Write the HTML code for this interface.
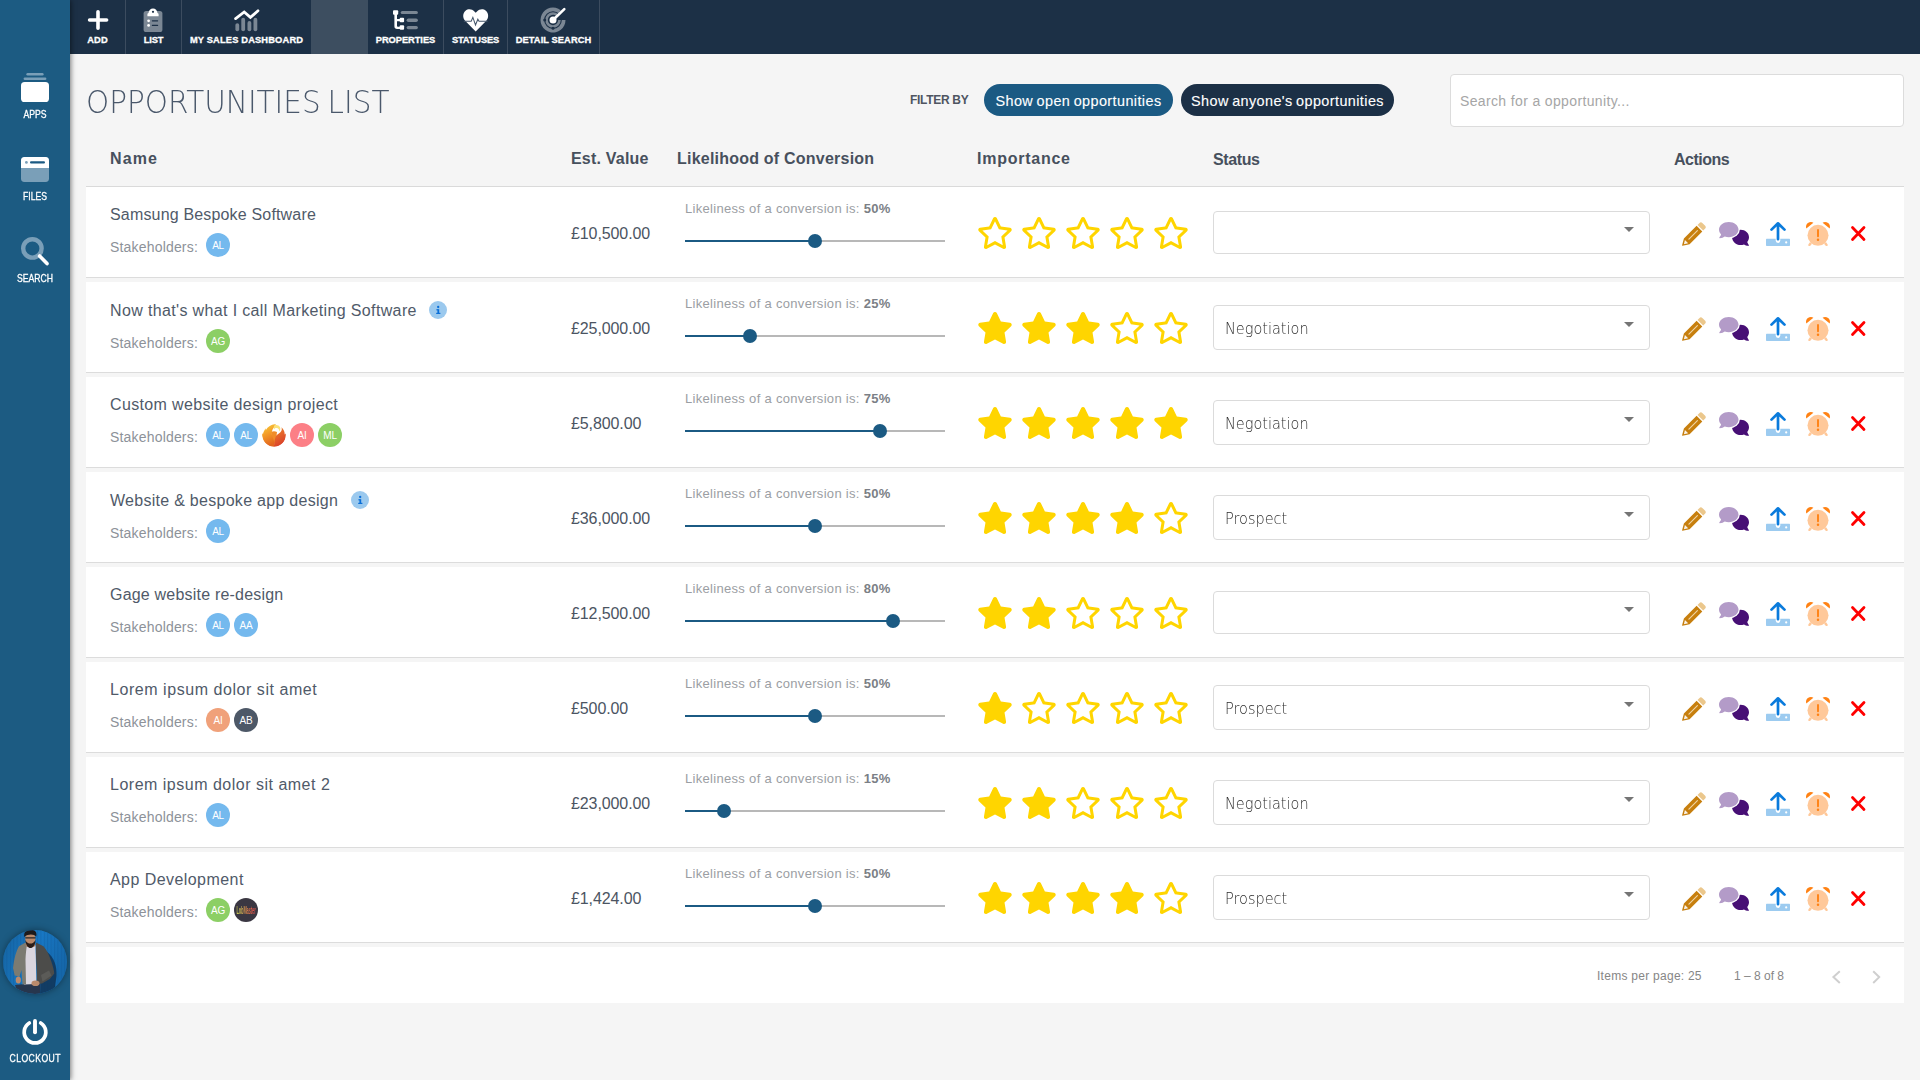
<!DOCTYPE html>
<html lang="en">
<head>
<meta charset="utf-8">
<title>Opportunities List</title>
<style>
*{box-sizing:border-box;margin:0;padding:0}
html,body{width:1920px;height:1080px;overflow:hidden}
body{background:#f5f5f5;font-family:"Liberation Sans",sans-serif;color:#4b5462;position:relative}
.abs,.topbar,.side,.list,.row,.row>div,.hd>*,.pager,.pager>*,.tb>*,.si>*{position:absolute}
svg{display:block}
svg.defs{position:absolute;width:0;height:0;overflow:hidden}

/* ---------- top bar ---------- */
.topbar{left:70px;top:0;width:1850px;height:54px;background:#1c3046}
.tb{position:absolute;top:0;height:54px;border-right:1px solid #3c4c5f}
.tb.on{background:#3d4e60;border-right:0}
.tb .lb{left:0;right:0;top:34px;height:12px;line-height:12px;text-align:center;font-weight:700;font-size:9.3px;letter-spacing:.16px;-webkit-text-stroke:.3px #fff;color:#fff;white-space:nowrap}
.tb svg{top:8px;left:50%;overflow:visible}

/* ---------- sidebar ---------- */
.side{left:0;top:0;width:70px;height:1080px;background:#1c5b82;box-shadow:1px 0 5px rgba(0,0,0,.5)}
.si{position:absolute;left:0;width:70px;height:60px}
.si .lb{left:0;right:0;text-align:center;font-size:10.3px;line-height:12px;color:#fff;white-space:nowrap;letter-spacing:0;-webkit-text-stroke:.28px #fff;transform:scaleX(.84)}
.si svg{overflow:visible}
.me{position:absolute;left:3px;top:930px;width:64px;height:64px;border-radius:50%;overflow:hidden;box-shadow:0 0 7px rgba(0,0,0,.4)}

/* ---------- heading / filters ---------- */
.hd{position:absolute;left:0;top:0;width:1920px;height:187px}
h1{left:85.6px;top:80px;transform:scaleX(.921);word-spacing:-2.6px;font:200 32px/44px "DejaVu Sans Light","DejaVu Sans","Liberation Sans",sans-serif;color:#4a586b;white-space:nowrap;transform-origin:0 50%}
.fby{left:910px;top:92px;font-weight:700;font-size:12px;line-height:16px;color:#4f5561;white-space:nowrap;letter-spacing:-.3px}
.pill{top:84px;height:32px;border-radius:16px;color:#fff;font-size:14.4px;line-height:32px;padding-top:1px;text-align:center;white-space:nowrap;letter-spacing:.42px;word-spacing:-1px;-webkit-text-stroke:.12px #fff}
.p1{left:984px;width:189px;background:#1b5a83}
.p2{left:1181px;width:213px;background:#1c3046}
.srch{left:1450px;top:74px;width:454px;height:53px;background:#fff;border:1px solid #dcdcdc;border-radius:4px;padding-left:9px;font-size:14px;line-height:53px;color:#a6a6a6;white-space:nowrap;letter-spacing:.36px}
.th{font-weight:700;font-size:16px;line-height:20px;color:#47505d;white-space:nowrap}
.hr{left:86px;top:186px;width:1818px;height:1px;background:#dadada}

/* ---------- rows ---------- */
.list{left:0;top:0;width:1920px;height:1080px}
.row{left:86px;width:1818px;height:91px;background:#fff;border-bottom:1px solid #dcdcdc}
.nm{left:24px;top:16px;height:24px;line-height:24px;font-size:16px;white-space:nowrap;color:#505a69}
.sh{left:24px;top:46px;height:24px;line-height:28px;font-size:14px;color:#8d9299;white-space:nowrap}
.sh .t{letter-spacing:.18px}
.row.inf .nm{top:17px}
.row.inf .sh{top:47px}
.av{position:absolute;top:0;width:24px;height:24px;border-radius:50%;color:#fff;font-size:10px;line-height:25px;text-align:center;letter-spacing:-.25px;overflow:hidden}
.av:nth-of-type(2){left:96px}
.av:nth-of-type(3){left:124px}
.av:nth-of-type(4){left:152px}
.av:nth-of-type(5){left:180px}
.av:nth-of-type(6){left:208px}
.av.b{background:#74b9ee}
.av.g{background:#8ccf65}
.av.r{background:#fc7f86}
.av.o{background:#f0a17a}
.av.d{background:#4d5867}
.av.fire{background:#fff}
.av.logo{background:#3a3742}
.av.logo i{position:absolute;left:-13px;top:0;width:50px;display:block;font-style:normal;font-weight:700;font-size:10px;line-height:25px;letter-spacing:-.3px;text-align:center;-webkit-text-stroke:0;background:linear-gradient(90deg,#c9c653 15%,#d98a4c 50%,#d4504a 85%);-webkit-background-clip:text;background-clip:text;color:transparent;transform:scale(.4,1.05)}
.info{position:absolute;left:100%;top:2px;margin-left:12.6px;width:18px;height:18px}
.val{left:485px;top:35px;letter-spacing:-.1px;font-size:16px;line-height:24px;white-space:nowrap;color:#4b5462}
.lk{left:599px;top:13px;font-size:13px;line-height:18px;color:#9b9ea3;white-space:nowrap;letter-spacing:.31px}
.lk b{color:#7b7f86}
.trk{left:599px;top:53px;width:260px;height:2px;background:#b8b8b8}
.trk .fill{position:absolute;left:0;top:0;height:2px;background:#1b5a83}
.trk .th{position:absolute;top:-6px;width:14px;height:14px;margin-left:-7px;border-radius:50%;background:#1b5a83}
.stars{left:891px;top:30px;width:230px;height:34px}
.stars svg{position:absolute;top:0;width:36px;height:32px}
.stars svg:nth-child(1){left:0}
.stars svg:nth-child(2){left:44px}
.stars svg:nth-child(3){left:88px}
.stars svg:nth-child(4){left:132px}
.stars svg:nth-child(5){left:176px}
.sel{left:1127px;top:23px;width:437px;height:45px;border:1px solid #dbdbdb;border-radius:4px;background:#fff;padding-left:11px;font:200 16px/45.6px "DejaVu Sans Light","DejaVu Sans",sans-serif;color:#2e2e2e;white-space:nowrap}
.sel .t{display:inline-block;transform:scaleX(.905);transform-origin:0 50%}
.sel.empty{top:24px;height:43px}
.sel.empty .ar{top:15px}
.sel .ar{position:absolute;right:15px;top:16px;width:0;height:0;border-left:5px solid transparent;border-right:5px solid transparent;border-top:5px solid #757575}
.act{left:1588px;top:33px;width:200px;height:28px}
.act svg{position:absolute;overflow:visible}
.a1{left:8px;top:2px;width:24px;height:24px}
.a2{left:45px;top:2px;width:30px;height:24px;}
.a3{left:92px;top:2px;width:24px;height:24px}
.a4{left:132px;top:2px;width:24px;height:24px}
.a5{left:177px;top:6.4px;width:14.5px;height:15px}

/* ---------- pager ---------- */
.pager{left:86px;top:947px;width:1818px;height:56px;background:#fff;font-size:12px;line-height:16px;color:#868686}
.pager>*{white-space:nowrap}
.ipp{left:1511px;top:21px;letter-spacing:.27px}
.n25{left:1602px;top:21px}
.rng{left:1648px;top:21px}
.pv{left:1738px;top:17px;width:24px;height:24px}
.nx{left:1778px;top:17px;width:24px;height:24px}

</style>
</head>
<body>
<svg class="defs" aria-hidden="true">
<defs>
<path id="i-star" fill="#ffd500" d="M259.3 17.8L194 150.2 47.9 171.5c-26.2 3.8-36.7 36.1-17.7 54.6l105.7 103-25 145.5c-4.5 26.3 23.2 46 46.4 33.7L288 439.6l130.7 68.7c23.2 12.2 50.9-7.4 46.4-33.7l-25-145.5 105.7-103c19-18.5 8.5-50.8-17.7-54.6L382 150.2 316.7 17.8c-11.7-23.6-45.6-23.9-57.4 0z"/>
<path id="i-staro" fill="#ffd500" d="M528.1 171.5L382 150.2 316.7 17.8c-11.7-23.6-45.6-23.9-57.4 0L194 150.2 47.9 171.5c-26.2 3.8-36.7 36.1-17.7 54.6l105.7 103-25 145.5c-4.5 26.3 23.2 46 46.4 33.7L288 439.6l130.7 68.7c23.2 12.2 50.9-7.4 46.4-33.7l-25-145.5 105.7-103c19-18.5 8.5-50.8-17.7-54.6zM388.6 312.3l23.7 138.4L288 385.4l-124.3 65.3 23.7-138.4-100.6-98 139-20.2 62.2-126 62.2 126 139 20.2-100.6 98z"/>
<g id="i-info"><circle cx="9" cy="9" r="9" fill="#9bc9ee"/><rect x="8.4" y="8.2" width="1.8" height="4.6" fill="#0b6fd8"/><rect x="7.4" y="8.2" width="1.8" height="1.2" fill="#0b6fd8"/><rect x="7.2" y="11.8" width="4.2" height="1.2" fill="#0b6fd8"/><circle cx="9.2" cy="6" r="1.15" fill="#0b6fd8"/></g>
<linearGradient id="g-fire" x1="0" y1="0" x2=".3" y2="1"><stop offset="0" stop-color="#f9d23c"/><stop offset=".5" stop-color="#f39a28"/><stop offset="1" stop-color="#e2661f"/></linearGradient><linearGradient id="g-fire2" x1="0" y1="0" x2=".4" y2="1"><stop offset="0" stop-color="#f08a2a"/><stop offset="1" stop-color="#d9402a"/></linearGradient>
<g id="i-fire"><path fill="#f08c28" d="M9 9c2-1 4-1 6 0l-1 8-2.2 6.8L10 17z"/><path fill="url(#g-fire)" d="M12.6 1.2C9.5 1.4 5.7 3.6 3.7 7.2c.2-1.3.1-2 .1-2C2.3 7 1.3 9 .9 11.4c-.5-.6-.8-1.3-.8-1.3-.3 3.5.8 7.1 3.3 9.8 2.2 2.4 5.3 3.8 8.4 3.9.6-3.3.4-6.4-1-9.2-1.3-2.7-1.5-5.6-.1-8.4.7-1.5 1.9-2.7 3.5-3.3.5-.7-.4-1.7-1.6-1.7z"/><path fill="url(#g-fire2)" d="M19.4 4.3c.8 1.7.4 3.6-1 5-1.5 1.5-3.6 2.2-4.6 4.1-1.4 2.8-1.3 6.7-2 10.4 3.3.1 6.6-1.3 8.9-3.8 2.5-2.7 3.5-6.2 3-9.7 0 0-.4.8-1 1.3.1-2.7-1.1-5.4-3.3-7.3z"/><path fill="#fbe27a" d="M12.2 2.5c2.3-1.1 4.8-.3 5.8 1.7.7 1.5.3 3.2-.9 4.2.3-1.3-.3-2.6-1.5-3.1-1.3-.6-2.8-.1-3.6 1.1-.3-1.4-.3-2.7.2-3.9z"/></g>
<g id="i-pencil"><path fill="#c77f0e" d="M.5 23.8c-.3.1-.5-.2-.4-.5L1.9 16.5 14.6 3.8l5.7 5.7L7.6 22.2z"/><path fill="#fff" d="M2.9 17.9l3.3 3.3-4.3 1.1z" opacity=".9"/><path d="M6.9 17.2l8.5-8.5" stroke="#f0d4a3" stroke-width="1.2" stroke-linecap="round" fill="none"/><path fill="#ebc78c" d="M15.5 2.9l2-2c.8-.8 2-.8 2.8 0l2.9 2.9c.8.8.8 2 0 2.8l-2 2z"/></g>
<g id="i-comments"><path fill="#470f75" d="M21.6 7.7c4.7 0 8.4 3.3 8.4 7.6 0 1.8-.7 3.4-1.8 4.7.5 1.5 1.5 2.8 1.7 3 .2.2.1.6-.2.7-.1 0-.2.1-.3.1-1.8 0-3.3-.6-4.4-1.3-1.1.4-2.2.6-3.4.6-4.7 0-8.5-3.5-8.5-7.8s3.8-7.6 8.5-7.6z"/><ellipse cx="9.9" cy="7.7" rx="10.9" ry="8.7" fill="#fff"/><path fill="#b39bc8" d="M9.8 0c5.4 0 9.7 3.4 9.7 7.6s-4.3 7.6-9.7 7.6c-1.4 0-2.8-.2-4-.7C4.6 15.3 2.9 16.2.7 16.2c-.4 0-.6-.4-.4-.7.1-.1 1.2-1.4 1.8-3C.8 11.2 0 9.5 0 7.6 0 3.4 4.4 0 9.8 0z"/></g>
<g id="i-upload"><path fill="#9ccbf0" d="M1 16.7h22c.6 0 1 .4 1 1v5.3c0 .6-.4 1-1 1H1c-.6 0-1-.4-1-1v-5.3c0-.6.4-1 1-1z"/><circle cx="20.2" cy="20.4" r="1.1" fill="#fff"/><path d="M12 18.6V3" stroke="#fff" stroke-width="4.6" stroke-linecap="round" fill="none"/><path d="M12 17.2V1.6M5.5 7.6L12 1.3l6.5 6.3" stroke="#0a7bdc" stroke-width="2.7" stroke-linecap="round" stroke-linejoin="round" fill="none"/></g>
<g id="i-alarm"><path fill="#ffc899" d="M3.9 20.3l2.1 1.5-1.7 2c-.4.4-1 .4-1.4.1l-.3-.2c-.5-.4-.5-1-.1-1.5zM20.1 20.3l-2.1 1.5 1.7 2c.4.4 1 .4 1.4.1l.3-.2c.5-.4.5-1 .1-1.5z"/><circle cx="12" cy="13.3" r="10.5" fill="#ffc899"/><path fill="#ff8214" d="M.3 6.4C-.4 4.6.2 2.4 1.9 1.1 3.6-.2 5.9-.3 7.4.8zM23.7 6.4c.7-1.8.1-4-1.6-5.3-1.7-1.3-4-1.4-5.5-.3z"/><path d="M12 8v6.2" stroke="#ff8214" stroke-width="1.9" stroke-linecap="round"/><circle cx="12" cy="17.8" r="1.25" fill="#ff8214"/></g>
<g id="i-x"><path d="M1.5 1.5l11.5 12M13 1.5l-11.5 12" stroke="#f00" stroke-width="2.8" stroke-linecap="round" fill="none"/></g>
</defs>
</svg>

<header class="topbar">
<div class="tb" style="left:0;width:56px"><svg width="22" height="22" style="margin-left:-10.9px;top:9px" viewBox="0 0 22 22"><path d="M11 2.8v16.4M2.6 11h17" stroke="#fff" stroke-width="3.6" stroke-linecap="round" fill="none"/></svg><span class="lb">ADD</span></div>
<div class="tb" style="left:56px;width:56px"><svg width="20" height="24" style="margin-left:-10.2px" viewBox="0 0 20 24"><rect x=".6" y="3" width="18.8" height="21" rx="2.6" fill="#7b8794"/><path d="M4.4 8.2V6.4c0-.8.5-1.2 1.1-1.4C5.7 2.4 7.6.5 10 .5s4.3 1.9 4.5 4.5c.6.2 1.1.6 1.1 1.4v1.8z" fill="#fff"/><circle cx="10" cy="3.8" r="1.1" fill="#1c3046"/><circle cx="5.6" cy="12.8" r="1.4" fill="#fff"/><circle cx="5.6" cy="17.4" r="1.4" fill="#fff"/><rect x="8.8" y="12.2" width="6.4" height="1.2" rx=".6" fill="#1c3046"/><rect x="8.8" y="16.8" width="6.4" height="1.2" rx=".6" fill="#1c3046"/></svg><span class="lb" style="letter-spacing:-.14px">LIST</span></div>
<div class="tb" style="left:112px;width:129px;border-right:0"><svg width="28" height="24" style="margin-left:-14px" viewBox="0 0 28 24"><g fill="#7b8794"><rect x="2.4" y="15.2" width="3.8" height="8" rx="1.9"/><rect x="8.3" y="9.8" width="3.8" height="13.4" rx="1.9"/><rect x="14.5" y="13" width="3.8" height="10.2" rx="1.9"/><rect x="20.5" y="9.8" width="3.8" height="13.4" rx="1.9"/></g><path d="M2.6 10.6l8.6-6.6 6.2 5.4 7.6-6.6" stroke="#fff" stroke-width="2.8" stroke-linecap="round" stroke-linejoin="miter" fill="none"/></svg><span class="lb">MY SALES DASHBOARD</span></div>
<div class="tb on" style="left:241px;width:57px"></div>
<div class="tb" style="left:298px;width:76px"><svg width="26" height="22" style="margin-left:-14px;top:9px" viewBox="0 0 26 22"><g fill="#7b8794"><rect x="8.7" y="1.9" width="17.2" height="3.2" rx="1.6"/><rect x="14.6" y="9.4" width="11.3" height="3.5" rx="1.75"/><rect x="14.6" y="17" width="11.3" height="3.2" rx="1.6"/></g><g fill="#fff"><rect x="1" y="1.3" width="5.2" height="4.4" rx="1"/><rect x="7.7" y="8.8" width="4.4" height="4.4" rx="1"/><rect x="7.7" y="16.3" width="4.4" height="4.4" rx="1"/><path d="M2.4 5h2.6v5h3v2.2H5v4.6c0 .6.3.9.9.9H8V20H5.2c-1.8 0-2.8-1-2.8-2.8z"/></g></svg><span class="lb" style="letter-spacing:-.05px">PROPERTIES</span></div>
<div class="tb" style="left:374px;width:64px"><svg width="25.4" height="23" style="margin-left:-12.6px;top:8.5px" viewBox="0 0 26 23" preserveAspectRatio="none"><path fill="#fff" d="M13 22.6L2.4 11.9C-.6 8.9-.4 4.2 2.6 1.7 5.3-.5 9.2-.1 11.7 2.4L13 3.8l1.3-1.4C16.8-.1 20.7-.5 23.4 1.7c3 2.5 3.2 7.2.2 10.2z"/><path d="M.8 12.3h7.6l1.7-3.9 2.7 7.6 2.4-5.8 1.2 2.1h8.8" fill="none" stroke="#44566b" stroke-width="1.05" stroke-linejoin="miter"/></svg><span class="lb" style="letter-spacing:-.12px">STATUSES</span></div>
<div class="tb" style="left:438px;width:92px"><svg width="26" height="26" style="margin-left:-13.5px;top:7.2px" viewBox="0 0 26 26"><path fill="#7b8794" d="M20.7 3.15A12.5 12.5 0 1 0 25.5 13H18.2A5.2 5.2 0 1 1 16.2 8.9z"/><circle cx="13" cy="13" r="8.3" fill="none" stroke="#1c3046" stroke-width="1.1"/><circle cx="4.7" cy="13.1" r="1.5" fill="#1c3046"/><circle cx="13" cy="21.3" r="1.5" fill="#1c3046"/><path d="M13 13L24.3 2.1" stroke="#fff" stroke-width="2.6" stroke-linecap="round"/><circle cx="13" cy="13" r="3.5" fill="#fff"/></svg><span class="lb" style="letter-spacing:.08px">DETAIL SEARCH</span></div>
</header>
<section class="hd">
<h1>OPPORTUNITIES LIST</h1>
<span class="fby">FILTER BY</span>
<div class="pill p1">Show open opportunities</div>
<div class="pill p2">Show anyone's opportunities</div>
<div class="srch">Search for a opportunity...</div>
<span class="th" style="left:110px;top:149px;letter-spacing:1.1px">Name</span>
<span class="th" style="left:571px;top:149px;letter-spacing:.2px">Est. Value</span>
<span class="th" style="left:677px;top:149px;letter-spacing:.22px">Likelihood of Conversion</span>
<span class="th" style="left:977px;top:149px;letter-spacing:.75px">Importance</span>
<span class="th" style="left:1213px;top:150px;letter-spacing:-.4px">Status</span>
<span class="th" style="left:1674px;top:150px;letter-spacing:-.5px">Actions</span>
<div class="hr"></div>
</section>

<main class="list">
<div class="row" style="top:187px">
<div class="nm" style="letter-spacing:0.17px"><span class="t">Samsung Bespoke Software</span></div>
<div class="sh"><span class="t">Stakeholders:</span><span class="av b">AL</span></div>
<div class="val">£10,500.00</div>
<div class="lk"><span class="t">Likeliness of a conversion is:</span> <b>50%</b></div>
<div class="trk"><div class="fill" style="width:130px"></div><div class="th" style="left:130px"></div></div>
<div class="stars"><svg viewBox="0 0 576 512"><use href="#i-staro"/></svg><svg viewBox="0 0 576 512"><use href="#i-staro"/></svg><svg viewBox="0 0 576 512"><use href="#i-staro"/></svg><svg viewBox="0 0 576 512"><use href="#i-staro"/></svg><svg viewBox="0 0 576 512"><use href="#i-staro"/></svg></div>
<div class="sel empty"><span class="t"></span><span class="ar"></span></div>
<div class="act"><svg class="a1" viewBox="0 0 24 24"><use href="#i-pencil"/></svg><svg class="a2" viewBox="0 0 30 24"><use href="#i-comments"/></svg><svg class="a3" viewBox="0 0 24 24"><use href="#i-upload"/></svg><svg class="a4" viewBox="0 0 24 24"><use href="#i-alarm"/></svg><svg class="a5" viewBox="0 0 14.5 15"><use href="#i-x"/></svg></div>
</div>
<div class="row inf" style="top:282px">
<div class="nm" style="letter-spacing:0.36px"><span class="t">Now that's what I call Marketing Software</span><span class="info"><svg viewBox="0 0 18 18" width="18" height="18"><use href="#i-info"/></svg></span></div>
<div class="sh"><span class="t">Stakeholders:</span><span class="av g">AG</span></div>
<div class="val">£25,000.00</div>
<div class="lk"><span class="t">Likeliness of a conversion is:</span> <b>25%</b></div>
<div class="trk"><div class="fill" style="width:65px"></div><div class="th" style="left:65px"></div></div>
<div class="stars"><svg viewBox="0 0 576 512"><use href="#i-star"/></svg><svg viewBox="0 0 576 512"><use href="#i-star"/></svg><svg viewBox="0 0 576 512"><use href="#i-star"/></svg><svg viewBox="0 0 576 512"><use href="#i-staro"/></svg><svg viewBox="0 0 576 512"><use href="#i-staro"/></svg></div>
<div class="sel"><span class="t">Negotiation</span><span class="ar"></span></div>
<div class="act"><svg class="a1" viewBox="0 0 24 24"><use href="#i-pencil"/></svg><svg class="a2" viewBox="0 0 30 24"><use href="#i-comments"/></svg><svg class="a3" viewBox="0 0 24 24"><use href="#i-upload"/></svg><svg class="a4" viewBox="0 0 24 24"><use href="#i-alarm"/></svg><svg class="a5" viewBox="0 0 14.5 15"><use href="#i-x"/></svg></div>
</div>
<div class="row" style="top:377px">
<div class="nm" style="letter-spacing:0.35px"><span class="t">Custom website design project</span></div>
<div class="sh"><span class="t">Stakeholders:</span><span class="av b">AL</span><span class="av b">AL</span><span class="av fire"><svg viewBox="0 0 24 24" width="24" height="24"><use href="#i-fire"/></svg></span><span class="av r">AI</span><span class="av g">ML</span></div>
<div class="val">£5,800.00</div>
<div class="lk"><span class="t">Likeliness of a conversion is:</span> <b>75%</b></div>
<div class="trk"><div class="fill" style="width:195px"></div><div class="th" style="left:195px"></div></div>
<div class="stars"><svg viewBox="0 0 576 512"><use href="#i-star"/></svg><svg viewBox="0 0 576 512"><use href="#i-star"/></svg><svg viewBox="0 0 576 512"><use href="#i-star"/></svg><svg viewBox="0 0 576 512"><use href="#i-star"/></svg><svg viewBox="0 0 576 512"><use href="#i-star"/></svg></div>
<div class="sel"><span class="t">Negotiation</span><span class="ar"></span></div>
<div class="act"><svg class="a1" viewBox="0 0 24 24"><use href="#i-pencil"/></svg><svg class="a2" viewBox="0 0 30 24"><use href="#i-comments"/></svg><svg class="a3" viewBox="0 0 24 24"><use href="#i-upload"/></svg><svg class="a4" viewBox="0 0 24 24"><use href="#i-alarm"/></svg><svg class="a5" viewBox="0 0 14.5 15"><use href="#i-x"/></svg></div>
</div>
<div class="row inf" style="top:472px">
<div class="nm" style="letter-spacing:0.28px"><span class="t">Website &amp; bespoke app design</span><span class="info"><svg viewBox="0 0 18 18" width="18" height="18"><use href="#i-info"/></svg></span></div>
<div class="sh"><span class="t">Stakeholders:</span><span class="av b">AL</span></div>
<div class="val">£36,000.00</div>
<div class="lk"><span class="t">Likeliness of a conversion is:</span> <b>50%</b></div>
<div class="trk"><div class="fill" style="width:130px"></div><div class="th" style="left:130px"></div></div>
<div class="stars"><svg viewBox="0 0 576 512"><use href="#i-star"/></svg><svg viewBox="0 0 576 512"><use href="#i-star"/></svg><svg viewBox="0 0 576 512"><use href="#i-star"/></svg><svg viewBox="0 0 576 512"><use href="#i-star"/></svg><svg viewBox="0 0 576 512"><use href="#i-staro"/></svg></div>
<div class="sel"><span class="t">Prospect</span><span class="ar"></span></div>
<div class="act"><svg class="a1" viewBox="0 0 24 24"><use href="#i-pencil"/></svg><svg class="a2" viewBox="0 0 30 24"><use href="#i-comments"/></svg><svg class="a3" viewBox="0 0 24 24"><use href="#i-upload"/></svg><svg class="a4" viewBox="0 0 24 24"><use href="#i-alarm"/></svg><svg class="a5" viewBox="0 0 14.5 15"><use href="#i-x"/></svg></div>
</div>
<div class="row" style="top:567px">
<div class="nm" style="letter-spacing:0.2px"><span class="t">Gage website re-design</span></div>
<div class="sh"><span class="t">Stakeholders:</span><span class="av b">AL</span><span class="av b">AA</span></div>
<div class="val">£12,500.00</div>
<div class="lk"><span class="t">Likeliness of a conversion is:</span> <b>80%</b></div>
<div class="trk"><div class="fill" style="width:208px"></div><div class="th" style="left:208px"></div></div>
<div class="stars"><svg viewBox="0 0 576 512"><use href="#i-star"/></svg><svg viewBox="0 0 576 512"><use href="#i-star"/></svg><svg viewBox="0 0 576 512"><use href="#i-staro"/></svg><svg viewBox="0 0 576 512"><use href="#i-staro"/></svg><svg viewBox="0 0 576 512"><use href="#i-staro"/></svg></div>
<div class="sel empty"><span class="t"></span><span class="ar"></span></div>
<div class="act"><svg class="a1" viewBox="0 0 24 24"><use href="#i-pencil"/></svg><svg class="a2" viewBox="0 0 30 24"><use href="#i-comments"/></svg><svg class="a3" viewBox="0 0 24 24"><use href="#i-upload"/></svg><svg class="a4" viewBox="0 0 24 24"><use href="#i-alarm"/></svg><svg class="a5" viewBox="0 0 14.5 15"><use href="#i-x"/></svg></div>
</div>
<div class="row" style="top:662px">
<div class="nm" style="letter-spacing:0.55px"><span class="t">Lorem ipsum dolor sit amet</span></div>
<div class="sh"><span class="t">Stakeholders:</span><span class="av o">AI</span><span class="av d">AB</span></div>
<div class="val">£500.00</div>
<div class="lk"><span class="t">Likeliness of a conversion is:</span> <b>50%</b></div>
<div class="trk"><div class="fill" style="width:130px"></div><div class="th" style="left:130px"></div></div>
<div class="stars"><svg viewBox="0 0 576 512"><use href="#i-star"/></svg><svg viewBox="0 0 576 512"><use href="#i-staro"/></svg><svg viewBox="0 0 576 512"><use href="#i-staro"/></svg><svg viewBox="0 0 576 512"><use href="#i-staro"/></svg><svg viewBox="0 0 576 512"><use href="#i-staro"/></svg></div>
<div class="sel"><span class="t">Prospect</span><span class="ar"></span></div>
<div class="act"><svg class="a1" viewBox="0 0 24 24"><use href="#i-pencil"/></svg><svg class="a2" viewBox="0 0 30 24"><use href="#i-comments"/></svg><svg class="a3" viewBox="0 0 24 24"><use href="#i-upload"/></svg><svg class="a4" viewBox="0 0 24 24"><use href="#i-alarm"/></svg><svg class="a5" viewBox="0 0 14.5 15"><use href="#i-x"/></svg></div>
</div>
<div class="row" style="top:757px">
<div class="nm" style="letter-spacing:0.5px"><span class="t">Lorem ipsum dolor sit amet 2</span></div>
<div class="sh"><span class="t">Stakeholders:</span><span class="av b">AL</span></div>
<div class="val">£23,000.00</div>
<div class="lk"><span class="t">Likeliness of a conversion is:</span> <b>15%</b></div>
<div class="trk"><div class="fill" style="width:39px"></div><div class="th" style="left:39px"></div></div>
<div class="stars"><svg viewBox="0 0 576 512"><use href="#i-star"/></svg><svg viewBox="0 0 576 512"><use href="#i-star"/></svg><svg viewBox="0 0 576 512"><use href="#i-staro"/></svg><svg viewBox="0 0 576 512"><use href="#i-staro"/></svg><svg viewBox="0 0 576 512"><use href="#i-staro"/></svg></div>
<div class="sel"><span class="t">Negotiation</span><span class="ar"></span></div>
<div class="act"><svg class="a1" viewBox="0 0 24 24"><use href="#i-pencil"/></svg><svg class="a2" viewBox="0 0 30 24"><use href="#i-comments"/></svg><svg class="a3" viewBox="0 0 24 24"><use href="#i-upload"/></svg><svg class="a4" viewBox="0 0 24 24"><use href="#i-alarm"/></svg><svg class="a5" viewBox="0 0 14.5 15"><use href="#i-x"/></svg></div>
</div>
<div class="row" style="top:852px">
<div class="nm" style="letter-spacing:0.44px"><span class="t">App Development</span></div>
<div class="sh"><span class="t">Stakeholders:</span><span class="av g">AG</span><span class="av logo"><i>LobMaster</i></span></div>
<div class="val">£1,424.00</div>
<div class="lk"><span class="t">Likeliness of a conversion is:</span> <b>50%</b></div>
<div class="trk"><div class="fill" style="width:130px"></div><div class="th" style="left:130px"></div></div>
<div class="stars"><svg viewBox="0 0 576 512"><use href="#i-star"/></svg><svg viewBox="0 0 576 512"><use href="#i-star"/></svg><svg viewBox="0 0 576 512"><use href="#i-star"/></svg><svg viewBox="0 0 576 512"><use href="#i-star"/></svg><svg viewBox="0 0 576 512"><use href="#i-staro"/></svg></div>
<div class="sel"><span class="t">Prospect</span><span class="ar"></span></div>
<div class="act"><svg class="a1" viewBox="0 0 24 24"><use href="#i-pencil"/></svg><svg class="a2" viewBox="0 0 30 24"><use href="#i-comments"/></svg><svg class="a3" viewBox="0 0 24 24"><use href="#i-upload"/></svg><svg class="a4" viewBox="0 0 24 24"><use href="#i-alarm"/></svg><svg class="a5" viewBox="0 0 14.5 15"><use href="#i-x"/></svg></div>
</div>
<div class="pager"><span class="ipp">Items per page:</span><span class="n25">25</span><span class="rng">1 – 8 of 8</span><svg class="pv" viewBox="0 0 24 24"><path d="M15.8 7.2L9.4 13.1l6.4 5.9" fill="none" stroke="#cfcfcf" stroke-width="2"/></svg><svg class="nx" viewBox="0 0 24 24"><path d="M9.2 7.2l6 5.9-6 5.9" fill="none" stroke="#cfcfcf" stroke-width="2"/></svg></div>
</main>
<nav class="side">
<div class="si" style="top:70px"><svg class="abs" style="left:21px;top:3px" width="28" height="30" viewBox="0 0 28 30"><rect x="5.4" y="0" width="17.2" height="2.4" rx="1.2" fill="#7a9fb8"/><rect x="2.6" y="4.4" width="22.8" height="2.6" rx="1.3" fill="#7a9fb8"/><rect x="0" y="9" width="28" height="20" rx="3.6" fill="#fff"/></svg><span class="lb" style="top:39px">APPS</span></div>
<div class="si" style="top:152px"><svg class="abs" style="left:21px;top:5px" width="28" height="25" viewBox="0 0 28 25"><rect x="0" y="0" width="28" height="25" rx="3.4" fill="#7a9fb8"/><path d="M0 11V3.4C0 1.5 1.5 0 3.4 0h21.2C26.5 0 28 1.5 28 3.4V11z" fill="#fff"/><circle cx="5.4" cy="5.4" r="1.4" fill="#7a9fb8"/><rect x="9" y="4.3" width="15" height="2.2" rx="1.1" fill="#1b5a83"/></svg><span class="lb" style="top:39px">FILES</span></div>
<div class="si" style="top:234px"><svg class="abs" style="left:21px;top:3px" width="28" height="29" viewBox="0 0 28 29"><circle cx="11.4" cy="11.4" r="9.2" fill="none" stroke="#7a9fb8" stroke-width="4.4"/><path d="M18.6 19l7.4 7.6" stroke="#fff" stroke-width="3.6" stroke-linecap="round"/></svg><span class="lb" style="top:39px">SEARCH</span></div>
<div class="me"><svg width="64" height="64" viewBox="0 0 64 64"><defs><linearGradient id="g-me" x1="0" x2="1" y1="0" y2=".3"><stop offset="0" stop-color="#15639f"/><stop offset=".55" stop-color="#1879c6"/><stop offset="1" stop-color="#1568ab"/></linearGradient><pattern id="p-me" width="3.4" height="64" patternUnits="userSpaceOnUse"><rect x="0" y="0" width="1.1" height="64" fill="#0e4f8a" opacity=".28"/></pattern></defs><rect width="64" height="64" fill="url(#g-me)"/><rect width="64" height="64" fill="url(#p-me)"/><path d="M44 22c7 5 10 14 9.5 24L51 64H37l2-36z" fill="#113456" opacity=".85"/><path d="M12 55l25.5-2.5L37 64H15z" fill="#27364d"/><path d="M21.5 15.5h11L33.5 54l-12.5.5z" fill="#dad6df"/><path d="M22.5 12.5l-6.5 3.7c-3 4.8-5 12.8-6 21.8l1.7 7.5 4.8 1 2-6.5 1 14.5 3.5-.3-.5-24.7c.2-5.5.8-10.5 1.5-15z" fill="#7b7b72"/><path d="M32 12l8.5 4.3c3.5 3.7 6 9.7 8 15.7 1.3 4 2.5 8.2 2.8 11.5l-4.5 5.5-7.8 4.5-5.5.5c.8-6 .3-13.5-.2-21-.3-6.5-.6-14-.3-20z" fill="#4c4c4a"/><path d="M38 45l8-4.5 2.5 5-9 6z" fill="#5b5b58"/><ellipse cx="15.3" cy="50" rx="2.6" ry="3.6" fill="#b98a6c"/><ellipse cx="32.5" cy="53.3" rx="4" ry="2.8" fill="#b98a6c"/><path d="M23.5 12c1.5 2.5 6.5 2.5 8 0l1 4c-3 1.8-7 1.8-10 0z" fill="#a87c60"/><ellipse cx="27.3" cy="8.6" rx="5.1" ry="6.6" fill="#b8896b"/><path d="M22.3 10c.7 5.8 3 8 5.2 8s4.8-2.5 5-8c-1.5 2.8-3 3.6-5 3.6S23.6 12.6 22.3 10z" fill="#2a1e1a"/><path d="M21.3 7c-.8-4.5 1.5-7.2 6.2-7.2 4.5 0 6.8 2.3 5.7 6.7-1.8-2.3-8-3-11.9.5z" fill="#1d1a1b"/><path d="M22.3 7.8h10.3" stroke="#2a2626" stroke-width="1.3" fill="none"/></svg></div>
<div class="si" style="top:1016px"><svg class="abs" style="left:22px;top:2px" width="26" height="27" viewBox="0 0 26 27"><path d="M7.3 5A10.8 10.8 0 1018.7 5" fill="none" stroke="#fff" stroke-width="3.7" stroke-linecap="round"/><path d="M13 3v11.2" stroke="#fff" stroke-width="3.9" stroke-linecap="round"/></svg><span class="lb" style="top:37px;letter-spacing:.5px;text-indent:.5px">CLOCKOUT</span></div>
</nav>

</body>
</html>
